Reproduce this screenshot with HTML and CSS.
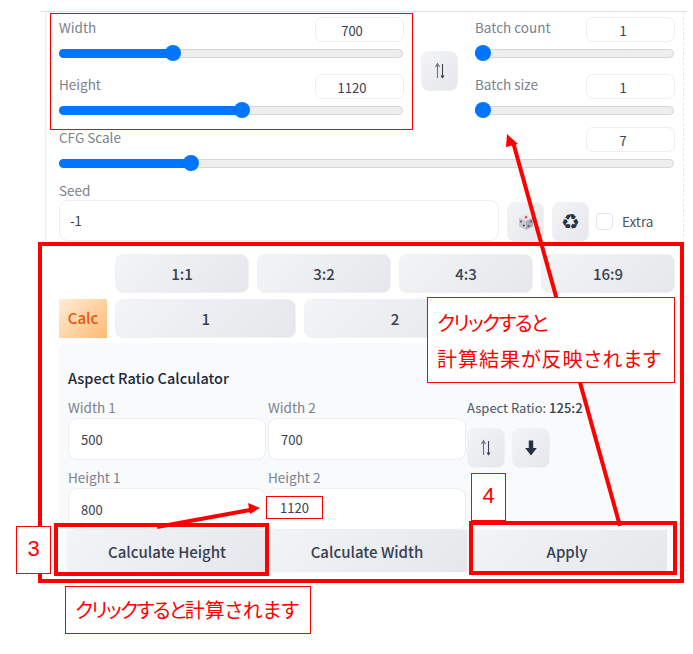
FILE: index.html
```html
<!DOCTYPE html>
<html lang="ja">
<head>
<meta charset="utf-8">
<title>Aspect Ratio Calculator</title>
<link rel="stylesheet" href="styles.css">
</head>
<body>
<div class="page">
  <div class="rule"></div>
  <section class="settings">
    <div class="dims">
      <div class="dims-col wide">
        <div class="field">
          <div class="field-head"><span class="label">Width</span><div class="num">700</div></div>
          <div class="slider"><div class="fill" style="width:114px"><i class="thumb"></i></div></div>
        </div>
        <div class="field">
          <div class="field-head"><span class="label">Height</span><div class="num">1120</div></div>
          <div class="slider"><div class="fill" style="width:183px"><i class="thumb"></i></div></div>
        </div>
      </div>
      <div class="swap-col">
        <button class="tool swap-btn"><svg class="ico" viewBox="0 0 16 18"><path d="M5.500 16V2M3.500 5l2-3.500 2 3.500" fill="none" stroke="#6b7280" stroke-width="1.100"/><path d="M10.500 2v14" stroke="#374151" stroke-width="1.100"/><path d="M8.500 13.500h4l-2 3.200z" fill="#374151"/></svg></button>
      </div>
      <div class="dims-col narrow">
        <div class="field">
          <div class="field-head"><span class="label">Batch count</span><div class="num">1</div></div>
          <div class="slider"><div class="fill" style="width:8px"><i class="thumb"></i></div></div>
        </div>
        <div class="field">
          <div class="field-head"><span class="label">Batch size</span><div class="num">1</div></div>
          <div class="slider"><div class="fill" style="width:8px"><i class="thumb"></i></div></div>
        </div>
      </div>
    </div>
    <div class="field cfg">
      <div class="field-head"><span class="label">CFG Scale</span><div class="num">7</div></div>
      <div class="slider"><div class="fill" style="width:132px"><i class="thumb"></i></div></div>
    </div>
    <div class="seed">
      <div class="seed-main">
        <div class="label seed-label">Seed</div>
        <div class="text-input seed-input">-1</div>
      </div>
      <button class="tool"><svg class="ico dice" viewBox="0 0 20 20"><path d="M10 2l7 3.500-7 3.500-7-3.500z" fill="#e8e6ea"/><path d="M3 5.500l7 3.500v9l-7-3.500z" fill="#c9c9d3"/><path d="M17 5.500L10 9v9l7-3.500z" fill="#aeaeba"/><circle cx="10" cy="5.300" r="1.200" fill="#e0483e"/><circle cx="5" cy="9.500" r="1" fill="#4b5060"/><circle cx="7.800" cy="13.500" r="1" fill="#4b5060"/><circle cx="12.500" cy="14" r="1" fill="#4b5060"/><circle cx="15" cy="9.500" r="1" fill="#4b5060"/></svg></button>
      <button class="tool recycle">♻</button>
      <label class="extra"><span class="check"></span><span class="extra-text">Extra</span></label>
    </div>
  </section>

  <section class="calc">
    <div class="preset-row">
      <div class="preset-grid four">
        <button class="preset">1:1</button>
        <button class="preset">3:2</button>
        <button class="preset">4:3</button>
        <button class="preset">16:9</button>
      </div>
    </div>
    <div class="preset-row second">
      <div class="calc-tab">Calc</div>
      <div class="preset-grid three">
        <button class="preset">1</button>
        <button class="preset">2</button>
        <button class="preset">3</button>
      </div>
    </div>
    <div class="panel">
      <h3 class="panel-title">Aspect Ratio Calculator</h3>
      <div class="panel-grid">
        <div class="cell">
          <div class="label small">Width 1</div>
          <div class="text-input">500</div>
        </div>
        <div class="cell">
          <div class="label small">Width 2</div>
          <div class="text-input">700</div>
        </div>
        <div class="cell">
          <div class="ratio">Aspect Ratio: <b>125:2</b></div>
          <div class="ratio-tools">
            <button class="tool small-tool"><svg class="ico" viewBox="0 0 16 18"><path d="M5.500 16V2M3.500 5l2-3.500 2 3.500" fill="none" stroke="#6b7280" stroke-width="1.100"/><path d="M10.500 2v14" stroke="#374151" stroke-width="1.100"/><path d="M8.500 13.500h4l-2 3.200z" fill="#374151"/></svg></button>
            <button class="tool small-tool"><svg class="ico" viewBox="0 0 16 18"><path d="M5.800 1.500h4.400v7.500h3.600L8 16.500 2.200 9h3.600z" fill="#27303f"/></svg></button>
          </div>
        </div>
        <div class="cell">
          <div class="label small">Height 1</div>
          <div class="text-input">800</div>
        </div>
        <div class="cell">
          <div class="label small">Height 2</div>
          <div class="text-input"></div>
        </div>
      </div>
      <div class="actions">
        <button class="action">Calculate Height</button>
        <button class="action">Calculate Width</button>
        <button class="action">Apply</button>
      </div>
    </div>
  </section>

  <svg class="arrows" viewBox="0 0 693 654">
    <path d="M620 526L513 142" stroke="#ff0000" stroke-width="4" fill="none"/>
    <path d="M507 134l11 10-12 3z" fill="#ff0000"/>
    <path d="M157 527L250 510" stroke="#ff0000" stroke-width="4" fill="none"/>
    <path d="M260 508L248 503l2 11z" fill="#ff0000"/>
  </svg>

  <div class="mark thin box-dims"></div>
  <div class="mark thick box-all"></div>
  <div class="mark thick box-height"></div>
  <div class="mark thick box-apply"></div>
  <div class="note value-note">1120</div>
  <div class="note step step-3">3</div>
  <div class="note step step-4">4</div>
  <div class="note jp jp-apply"><span class="kana">クリックすると</span><br><span class="wide-line">計算結果が反映されます</span></div>
  <div class="note jp jp-calc"><span class="kana">クリックすると</span>計算されます</div>
</div>
</body>
</html>
```
FILE: styles.css
```css
* { box-sizing: border-box; }
html, body { margin: 0; padding: 0; background: #fff; }
body {
  font-family: "Noto Sans CJK JP", "Noto Sans", sans-serif;
  color: #374151;
  overflow: hidden;
}
.page { position: relative; width: 693px; height: 654px; padding-top: 11px; }
.rule { height: 1px; margin: 0 6px 0 40px; background: #e0e2e6; }

.settings {
  margin-left: 45px;
  width: 639px;
  height: 230px;
  padding: 5px 8px 0 12px;
  border-left: 2px solid #f3f4f6;
  border-right: 1px dashed #e5e7eb;
}
.dims { display: flex; gap: 17px; }
.dims-col { display: flex; flex-direction: column; gap: 13px; }
.wide { width: 345px; }
.narrow { width: 200px; }
.swap-col { padding-top: 34px; }
.field-head { display: flex; justify-content: space-between; height: 25px; }
.label { font-size: 13.500px; line-height: 20px; color: #7b818e; }
.num {
  width: 89px;
  height: 25px;
  padding-right: 15px;
  border: 1px solid #eceef1;
  border-radius: 7px;
  background: #fff;
  text-align: center;
  font-size: 13px;
  line-height: 25px;
  color: #374151;
}
.slider {
  height: 9px;
  margin-top: 7px;
  margin-bottom: 3px;
  margin-right: 1px;
  border: 1px solid #d6d6d6;
  border-radius: 5px;
  background: #eeeeee;
  position: relative;
}
.fill {
  position: absolute;
  left: -1px;
  top: -1px;
  height: 9px;
  border-radius: 5px 0 0 5px;
  background: #0075ff;
}
.thumb {
  position: absolute;
  right: -8px;
  top: -4px;
  width: 16px;
  height: 16px;
  border-radius: 50%;
  background: #0075ff;
}
.cfg { margin-top: 9px; }
.seed { display: flex; align-items: flex-start; margin-top: 13px; }
.seed-main { width: 440px; }
.seed-label { height: 19px; line-height: 18px; }
.text-input {
  height: 42px;
  padding: 0 12px;
  border: 1px solid #eceef1;
  border-radius: 9px;
  background: #fff;
  font-size: 13px;
  line-height: 41px;
  color: #374151;
}
.seed-input { height: 41px; line-height: 39px; padding-left: 10px; }
.tool {
  display: flex;
  align-items: center;
  justify-content: center;
  width: 37px;
  height: 40px;
  padding: 0;
  border: 1px solid #f0f1f3;
  border-radius: 8px;
  background: linear-gradient(135deg, #f3f4f6, #e5e7eb);
}
.seed .tool { margin-top: 21px; margin-left: 8px; }
.ico { width: 16px; height: 18px; display: block; }
.dice { width: 20px; height: 20px; }
.recycle { font-family: "DejaVu Sans", sans-serif; font-size: 21px; line-height: 1; color: #27303f; }
.extra { display: flex; align-items: center; margin-top: 32px; margin-left: 7px; }
.check {
  width: 17px;
  height: 17px;
  border: 1px solid #e2e4e8;
  border-radius: 4px;
  background: #fff;
}
.extra-text { margin-left: 9px; font-size: 13.500px; line-height: 17px; color: #4b5563; }

.calc { margin: 12px 0 0 59px; width: 616px; }
.preset-row { display: flex; justify-content: flex-end; gap: 8px; }
.preset-row.second { margin-top: 6px; }
.preset-grid { display: grid; gap: 8px; width: 560px; }
.four { grid-template-columns: repeat(4, 1fr); }
.three { grid-template-columns: repeat(3, 1fr); }
.preset {
  height: 39px;
  padding: 0 0 1px;
  border: 1px solid #f0f1f3;
  border-radius: 8px;
  background: linear-gradient(135deg, #f3f4f6, #e5e7eb);
  font: 500 15px/1 "Noto Sans CJK JP", sans-serif;
  color: #374151;
}
.calc-tab {
  width: 48px;
  height: 39px;
  background: linear-gradient(135deg, #ffedd5, #fdba74);
  text-align: center;
  font-size: 15px;
  font-weight: 500;
  line-height: 38px;
  color: #ea580c;
}
.panel {
  height: 230px;
  margin-top: 5px;
  padding: 25px 8px 0 9px;
  border-radius: 8px 8px 0 0;
  background: #f9fafb;
}
.panel-title {
  margin: 0 0 11px;
  font-size: 14.500px;
  font-weight: 500;
  line-height: 19px;
  color: #1f2937;
}
.panel-grid {
  display: grid;
  grid-template-columns: 200px 199px 200px;
  grid-template-rows: 62px 60px;
  row-gap: 8px;
}
.label.small { height: 20px; font-size: 13.500px; line-height: 18px; }
.cell .text-input { width: 198px; }
.ratio { height: 30px; font-size: 13px; line-height: 20px; color: #4b5563; white-space: nowrap; }
.ratio b { color: #374151; font-weight: 500; }
.ratio-tools { display: flex; gap: 7px; }
.small-tool { width: 38px; height: 40px; }
.actions { display: grid; grid-template-columns: repeat(3, 200px); margin: 2px 0 0 -1px; }
.action {
  height: 42px;
  padding: 0;
  border: 0;
  background: linear-gradient(135deg, #f3f4f6, #e5e7eb);
  font: 500 15px/1 "Noto Sans CJK JP", sans-serif;
  color: #374151;
}

.arrows { position: absolute; left: 0; top: 0; width: 693px; height: 654px; }
.mark { position: absolute; border: 1px solid #ff0000; }
.thick { border-width: 4px; }
.box-dims { left: 50px; top: 13px; width: 363px; height: 117px; }
.box-all { left: 38px; top: 242px; width: 646px; height: 341px; }
.box-height { left: 54px; top: 523px; width: 215px; height: 53px; }
.box-apply { left: 469px; top: 521px; width: 208px; height: 54px; }
.note { position: absolute; border: 1px solid #ff0000; background: #fff; color: #ff0000; }
.value-note {
  left: 266px;
  top: 496px;
  width: 57px;
  height: 23px;
  padding-left: 13px;
  font-size: 13px;
  line-height: 22px;
  color: #374151;
}
.step {
  width: 35px;
  height: 48px;
  text-align: center;
  font-family: "Liberation Sans", sans-serif;
  font-size: 22px;
  line-height: 44px;
}
.step-3 { left: 16px; top: 526px; }
.step-4 { left: 471px; top: 473px; }
.jp { font-size: 20px; font-feature-settings: "palt"; white-space: nowrap; }
.kana { letter-spacing: -1.700px; }
.wide-line { letter-spacing: 1px; }
.jp-apply { left: 427px; top: 297px; width: 248px; height: 86px; padding: 7px 0 0 9px; line-height: 36px; }
.jp-calc { left: 65px; top: 586px; width: 246px; height: 48px; padding-left: 9px; line-height: 46px; }
```
